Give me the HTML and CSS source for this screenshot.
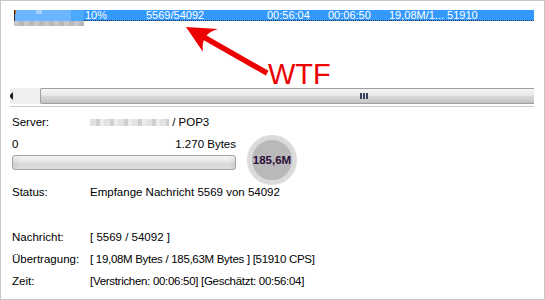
FILE: index.html
```html
<!DOCTYPE html>
<html lang="de">
<head>
  <meta charset="UTF-8">
  <title>Empfange Nachrichten</title>
  <link rel="stylesheet" href="styles.css">
</head>
<body>
  <div class="window">
    <div class="list">
      <div class="row selected">
        <div class="blur"></div>
        <div class="cells">
          <span class="cell w60">10%</span>
          <span class="cell w120">5569/54092</span>
          <span class="cell w60">00:56:04</span>
          <span class="cell w60">00:06:50</span>
          <span class="cell">19,08M/1... 51910</span>
        </div>
      </div>
      <div class="blur-under"></div>
    </div>

    <!-- annotation drawn over the screenshot -->
    <svg class="note" width="545" height="100" viewBox="0 0 545 100">
      <path d="M186,27 L218,29 Q210,31 206.5,35.5 L268.5,70.8 L265.8,75.6 L203.8,40.2 Q202,45 203,52 Z" fill="#ec0000"/>
      <text x="268" y="84" class="wtf">WTF</text>
    </svg>

    <div class="hscroll">
      <div class="hs-btn"><span class="arrow-left"></span></div>
      <div class="hs-thumb"><span class="grip"></span></div>
    </div>
    <div class="sep"></div>

    <div class="info">
      <div class="line">
        <span class="label">Server:</span>
        <span class="value"><span class="host"></span> / POP3</span>
      </div>

      <div class="transfer">
        <div class="bar-col">
          <div class="bar-head">
            <span>0</span>
            <span>1.270 Bytes</span>
          </div>
          <div class="bar"></div>
        </div>
        <div class="total">185,6M</div>
      </div>

      <div class="line">
        <span class="label">Status:</span>
        <span class="value">Empfange Nachricht 5569 von 54092</span>
      </div>

      <div class="line gap-big">
        <span class="label">Nachricht:</span>
        <span class="value">[ 5569 / 54092 ]</span>
      </div>
      <div class="line gap">
        <span class="label">Übertragung:</span>
        <span class="value tight">[ 19,08M Bytes / 185,63M Bytes ] [51910 CPS]</span>
      </div>
      <div class="line gap">
        <span class="label">Zeit:</span>
        <span class="value tight">[Verstrichen: 00:06:50] [Geschätzt: 00:56:04]</span>
      </div>
    </div>
  </div>
</body>
</html>
```

FILE: styles.css
```css
body {
  margin: 0;
  background: #fff;
  font-family: 'Liberation Sans', Arial, sans-serif;
  font-size: 11.5px;
  color: #000;
}
.window {
  position: relative;
  width: 545px;
  height: 300px;
  box-sizing: border-box;
  border: 1px solid #c8c8c8;
  overflow: hidden;
}
.list {
  margin-top: 9px;
  padding-left: 13px;
}
.row {
  display: flex;
  width: 520px;
  height: 11px;
}
.selected {
  background: #3399ff;
  color: #fff;
}
.blur {
  width: 70px;
  height: 11px;
  border-left: 1px solid #3a2a20;
  box-sizing: border-box;
  background:
    linear-gradient(#c46a1c, #c46a1c) 0 0 / 1px 4px no-repeat,
    linear-gradient(#a2d3ff, #a2d3ff) 21px 0 / 6px 4px no-repeat,
    linear-gradient(90deg, #6cb5ff 0 56px, #4da8ff 56px);
}
.cells {
  display: flex;
  flex: 1;
  font-size: 11px;
  line-height: 11px;
  border-bottom: 1px dotted #333;
  height: 10px;
}
.cell {
  padding-left: 1px;
  white-space: nowrap;
}
.w60 { width: 60px; }
.w120 { width: 120px; }
.blur-under {
  width: 70px;
  height: 5px;
  background: repeating-linear-gradient(90deg, #c3c7cb 0 5px, #b5b9bd 5px 10px);
}
.note {
  position: absolute;
  left: -1px;
  top: -1px;
}
.wtf {
  font-family: 'Liberation Sans', Arial, sans-serif;
  font-size: 29px;
  fill: #ec0000;
}
.hscroll {
  display: flex;
  margin: 62px 0 0 9px;
  width: 524px;
  height: 16px;
}
.hs-btn {
  width: 30px;
  display: flex;
  align-items: center;
  background: #efefef;
  overflow: hidden;
}
.arrow-left {
  margin-left: -1px;
  border-right: 4px solid #1c1c1c;
  border-top: 4px solid transparent;
  border-bottom: 4px solid transparent;
}
.hs-thumb {
  flex: 1;
  display: flex;
  align-items: center;
  padding-left: 319px;
  border: 1px solid #a0a0a0;
  border-right: none;
  border-radius: 2px 0 0 2px;
  background: linear-gradient(#f4f4f4, #e9e9e9 45%, #d9d9d9 50%, #c9c9c9 90%, #b8c0c8);
}
.grip {
  width: 8px;
  height: 6px;
  background: repeating-linear-gradient(90deg, #3c4060 0 2px, transparent 2px 3px);
}
.sep {
  margin: 2px 0 0 9px;
  width: 524px;
  height: 1px;
  background: #c4cad0;
}
.info {
  padding: 8px 0 0 11px;
}
.line {
  display: flex;
  line-height: 14px;
}
.label {
  width: 78px;
}
.tight {
  letter-spacing: -0.3px;
}
.host {
  display: inline-block;
  width: 79px;
  height: 7px;
  vertical-align: 0;
  background: repeating-linear-gradient(90deg, #e2e2e2 0 6px, #cfcfcf 6px 10px, #ececec 10px 14px);
}
.gap-big { margin-top: 31px; }
.gap { margin-top: 8px; }
.transfer {
  display: flex;
  align-items: flex-start;
  margin-top: 6px;
  height: 50px;
}
.bar-col {
  width: 224px;
  padding-top: 2px;
}
.bar-head {
  display: flex;
  justify-content: space-between;
  line-height: 14px;
}
.bar {
  margin-top: 4px;
  height: 15px;
  box-sizing: border-box;
  border: 1px solid #a3a3a3;
  border-radius: 3px;
  background:
    linear-gradient(90deg, rgba(0,0,0,0.06), transparent 8px, transparent 216px, rgba(0,0,0,0.06)),
    linear-gradient(#f4f4f4, #e8e8e8 45%, #d8d8d8 55%, #dedede);
}
.total {
  margin-left: 11px;
  width: 50px;
  height: 50px;
  box-sizing: border-box;
  border: 5px solid #dbdbdb;
  border-radius: 50%;
  background: #b9b9b9;
  color: #2e0e3a;
  font-weight: bold;
  font-size: 11.5px;
  line-height: 40px;
  text-align: center;
}
```
